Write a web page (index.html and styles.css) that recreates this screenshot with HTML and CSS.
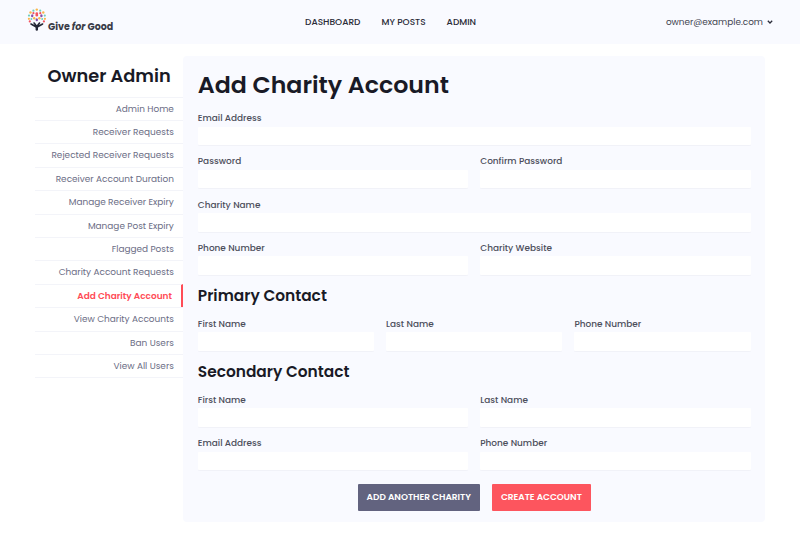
FILE: index.html
```html
<!DOCTYPE html>
<html lang="en">
<head>
<meta charset="utf-8">
<title>Give for Good</title>
<link rel="stylesheet" href="styles.css">
</head>
<body>
<header class="topbar">
  <a class="brand">
    <svg class="tree" viewBox="0 0 20 24">
      <g fill="#fbb54a"><circle cx="9.8" cy="1.6" r="1.2"/><circle cx="3.5" cy="4.5" r="1.2"/><circle cx="16.3" cy="4.5" r="1.2"/><circle cx="1.9" cy="10.8" r="1.1"/><circle cx="17.9" cy="10.8" r="1.1"/><circle cx="7.2" cy="10.2" r="1.2"/><circle cx="12.4" cy="10.2" r="1.2"/></g>
      <g fill="#6fcfbd"><circle cx="6.4" cy="2.7" r="1.1"/><circle cx="13.2" cy="2.7" r="1.1"/><circle cx="2" cy="7.6" r="1.1"/><circle cx="17.8" cy="7.6" r="1.1"/><circle cx="4.4" cy="11" r="1"/><circle cx="15.2" cy="11" r="1"/></g>
      <g fill="#f4545f"><rect x="8.5" y="4.3" width="2.6" height="4.2" rx="1.2"/><circle cx="6.4" cy="5.2" r="1.1"/><circle cx="13.3" cy="5.2" r="1.1"/><circle cx="2.8" cy="13.4" r="1.1"/><circle cx="16.9" cy="13.4" r="1.1"/></g>
      <g fill="#8550a8"><ellipse cx="5.2" cy="7.8" rx="1.2" ry="1.5"/><ellipse cx="14.4" cy="7.8" rx="1.2" ry="1.5"/><ellipse cx="9.8" cy="11.7" rx="1.2" ry="1.5"/></g>
      <g fill="none" stroke="#252736" stroke-linecap="round"><path stroke-width="1.6" d="M9.8 19.2L4 16M9.8 19.2L15.6 16M9.8 18.6L7.1 15M9.8 18.6L12.5 15"/><path stroke-width="2.4" d="M9.8 18.5V21.6"/></g>
    </svg>
    <span class="brand-name">Give <i>for</i> Good</span>
  </a>
  <nav class="nav"><a>DASHBOARD</a><a>MY POSTS</a><a>ADMIN</a></nav>
  <div class="account"><span>owner@example.com</span><svg class="chev" viewBox="0 0 6 4"><path d="M.8.8L3 3L5.2.8"/></svg></div>
</header>
<div class="page">
  <aside class="sidebar">
    <h2>Owner Admin</h2>
    <ul>
      <li>Admin Home</li><li>Receiver Requests</li><li>Rejected Receiver Requests</li><li>Receiver Account Duration</li><li>Manage Receiver Expiry</li><li>Manage Post Expiry</li><li>Flagged Posts</li><li>Charity Account Requests</li><li class="active">Add Charity Account</li><li>View Charity Accounts</li><li>Ban Users</li><li>View All Users</li>
    </ul>
  </aside>
  <main class="panel">
    <h1>Add Charity Account</h1>
    <div class="rows">
      <div class="row"><label>Email Address<input></label></div>
      <div class="row"><label>Password<input type="password"></label><label>Confirm Password<input type="password"></label></div>
      <div class="row"><label>Charity Name<input></label></div>
      <div class="row"><label>Phone Number<input></label><label>Charity Website<input></label></div>
    </div>
    <h3>Primary Contact</h3>
    <div class="rows">
      <div class="row"><label>First Name<input></label><label>Last Name<input></label><label>Phone Number<input></label></div>
    </div>
    <h3>Secondary Contact</h3>
    <div class="rows">
      <div class="row"><label>First Name<input></label><label>Last Name<input></label></div>
      <div class="row"><label>Email Address<input></label><label>Phone Number<input></label></div>
    </div>
    <div class="actions"><button class="btn-add">ADD ANOTHER CHARITY</button><button class="btn-create">CREATE ACCOUNT</button></div>
  </main>
</div>
</body>
</html>
```
FILE: styles.css
```css
* { box-sizing: border-box; margin: 0; padding: 0; }
body { font-family: Poppins, Inter, sans-serif; background: #fff; color: #191a26; font-size: 8.93px; height: 535px; overflow: hidden; }
.topbar { height: 44px; background: #f9faff; display: grid; grid-template-columns: 278px auto 1fr; align-items: center; padding: 0 27px; }
.brand { display: flex; align-items: flex-start; height: 24px; margin-top: -5px; }
.tree { width: 20px; height: 24px; }
.brand-name { font-size: 9.5px; font-weight: 700; line-height: 12px; margin: 13px 0 0 1px; color: #3a3c48; white-space: nowrap; }
.nav { display: flex; gap: 21px; font-size: 9px; font-weight: 500; line-height: 14px; color: #2a2b37; }
.account { display: flex; justify-content: flex-end; align-items: center; gap: 4px; font-size: 8.9px; color: #42444f; }
.chev { width: 6px; height: 4px; fill: none; stroke: #2b2d3a; stroke-width: 1.3; }
.page { display: grid; grid-template-columns: 148.4px 581.6px; padding: 12px 0 0 35px; align-items: start; }
.sidebar h2 { font-size: 17.8px; font-weight: 600; line-height: 40.5px; padding-right: 12.7px; text-align: right; white-space: nowrap; }
.sidebar ul { list-style: none; border-bottom: 1px solid #f3f4f9; }
.sidebar li { height: 23.42px; line-height: 22px; border-top: 1px solid #f3f4f9; padding-right: 9.5px; text-align: right; color: #6b6d85; white-space: nowrap; }
.sidebar .active { color: #ff4c56; font-weight: 600; border-right: 2px solid #ff4c56; }
.panel { height: 465.5px; background: #f9faff; border-radius: 4px; padding: 9.5px 14.3px 0 14.4px; }
h1 { font-size: 23.7px; font-weight: 600; line-height: 37.4px; margin-bottom: 9.1px; white-space: nowrap; }
h3 { font-size: 15.4px; font-weight: 600; line-height: 22px; margin: 9.8px 0 11px; white-space: nowrap; }
.rows { display: flex; flex-direction: column; gap: 10.1px; }
.row { display: flex; gap: 12px; }
label { flex: 1; min-width: 0; font-weight: 500; color: #4c4e5b; line-height: 12px; white-space: nowrap; }
input { display: block; width: 100%; height: 18.5px; margin-top: 2.6px; border: 0; border-radius: 1px; background: #fff; box-shadow: 0 1px 1px rgba(30,30,60,.035); }
.row { height: 33.2px; }
.actions { display: flex; justify-content: center; gap: 12px; margin-top: 14px; }
button { height: 27px; border: 0; border-radius: 1px; color: #fff; font: 600 8.95px Poppins, Inter, sans-serif; white-space: nowrap; }
.btn-add { width: 122.3px; background: #62637f; }
.btn-create { width: 99px; background: #fd555e; }
```
